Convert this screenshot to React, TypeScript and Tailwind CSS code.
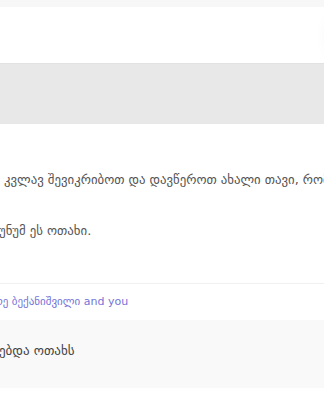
import React from 'react';

const App = () => {
  return (
    <div className="relative w-[324px] h-[400px] overflow-hidden bg-white" style={{ fontFamily: '"DejaVu Sans", sans-serif' }}>
      <div className="h-[7px] bg-[#f7f7f7] shadow-[0_1px_2px_rgba(0,0,0,0.06)]" />
      <div className="h-[56px] bg-white" />
      <div className="h-[61px] bg-[#e8e8e8] border-t border-[#e2e2e2]" />
      <div className="pt-[47px] text-[12.8px] text-[#555] whitespace-nowrap">
        <p className="-ml-[17px] leading-[18px]">და კვლავ შევიკრიბოთ და დავწეროთ ახალი თავი, რომელიც</p>
        <p className="mt-[33px] -ml-[1px] leading-[18px]">უნუმ ეს ოთახი.</p>
      </div>
      <div className="mt-[43px] border-t border-[#f0f0f0]" />
      <div className="py-[9px] text-[11px] text-[#7474d8] whitespace-nowrap">
        <p className="-ml-[6px] leading-[18px]">რე ბექანიშვილი and you</p>
      </div>
      <div className="h-[68px] bg-[#f9f9f9] pt-[22px] text-[13px] text-[#444] whitespace-nowrap">
        <p className="-ml-[1px] leading-[18px]">ებდა ოთახს</p>
      </div>
      <div className="absolute top-[10px] right-[-56px] w-[52px] h-[52px] rounded-full bg-white shadow-[0_0_16px_rgba(0,0,0,0.06)]" />
    </div>
  );
};

export default App;
